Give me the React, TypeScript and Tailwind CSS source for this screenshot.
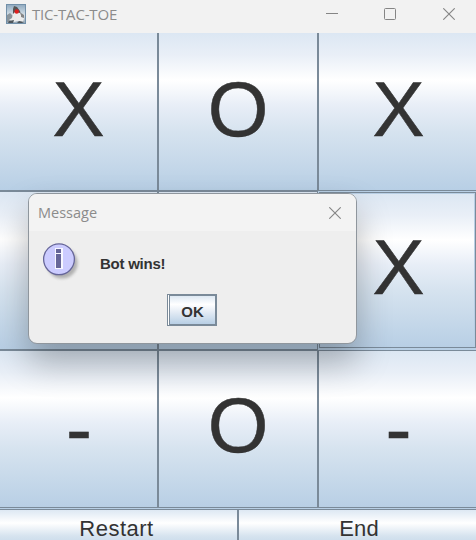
import type { ReactNode } from "react";

const STEEL =
  "bg-[linear-gradient(180deg,#dce7f3_0%,#e9eff7_14%,#ffffff_30%,#e8eef7_46%,#d6e3ef_63%,#b8cfe5_100%)]";

function Mark({ children, className = "" }: { children: ReactNode; className?: string }) {
  return (
    <span className={`block text-[78px] leading-[90px] text-[#333333] [-webkit-text-stroke:0.5px_#333333] ${className}`}>
      {children}
    </span>
  );
}

function Cell({ mark, nudge = "" }: { mark: string; nudge?: string }) {
  return (
    <div className={`flex items-center justify-center ${STEEL}`}>
      {mark && <Mark className={`${mark === "-" ? "" : "pb-1.5"} ${nudge}`}>{mark}</Mark>}
    </div>
  );
}

function CloseIcon() {
  return (
    <svg width="12" height="12" viewBox="0 0 12 12" fill="none" stroke="#858585" strokeWidth="1.1">
      <path d="M0.3 0.3 11.7 11.7M11.7 0.3 0.3 11.7" />
    </svg>
  );
}

function DukeIcon() {
  return (
    <svg width="20" height="20" viewBox="0 0 20 20">
      <defs>
        <linearGradient id="sky" x1="0" y1="0" x2="0" y2="1">
          <stop offset="0" stopColor="#8fa9bf" />
          <stop offset="0.55" stopColor="#d6e1e9" />
          <stop offset="1" stopColor="#91a3b2" />
        </linearGradient>
      </defs>
      <rect x="0.5" y="0.5" width="19" height="19" fill="url(#sky)" stroke="#7290a9" />
      <path d="M1 11 4 9 7 12 5 18H1Z" fill="#8b959c" />
      <path d="M7 5 8 2 11 3 14 7 15 11 12 11 7 10Z" fill="#555555" />
      <path d="M7 10 9 8 14 9 16 13 18 14 17 18 12 17 8 18 3 16 6 14Z" fill="#ececec" />
      <path d="M15 9 18 11 18 14 15 13Z" fill="#858585" />
      <path d="M3 17 8 16 7 19H2ZM13 17 18 18 16 19H11Z" fill="#4f565b" />
      <circle cx="10.7" cy="7.5" r="2.2" fill="#dd2020" />
    </svg>
  );
}

function InfoIcon() {
  return (
    <svg width="38" height="40" viewBox="0 0 38 40">
      <defs>
        <filter id="soft" x="-20%" y="-20%" width="150%" height="150%">
          <feGaussianBlur stdDeviation="1.5" />
        </filter>
      </defs>
      <circle cx="20" cy="21" r="15.5" fill="#888" opacity="0.6" filter="url(#soft)" />
      <circle cx="17" cy="17.3" r="15.4" fill="#ccccff" stroke="#666699" strokeWidth="1.3" />
      <path d="M13 6h8v21h-8z" fill="#f7f7ff" />
      <path d="M14 7h5v4h-5zM14 12h5v14h-5z" fill="#666699" />
    </svg>
  );
}

export default function App() {
  return (
    <div className="relative flex h-[540px] w-[476px] flex-col overflow-hidden bg-[#eeeeee] font-['Liberation_Sans',sans-serif]">
      <header className="flex h-[33px] shrink-0 items-start bg-[#f2f2f2] pl-1.5 text-[#8b8b8b]">
        <div className="pt-1"><DukeIcon /></div>
        <span className="ml-1.5 pt-1 font-['Open_Sans',sans-serif] text-[15px] leading-5 tracking-[-0.18px]">TIC-TAC-TOE</span>
        <div className="ml-auto flex items-center gap-[46px] pr-[21px] pt-2">
          <svg className="-ml-px mr-0.5" width="12" height="12" viewBox="0 0 12 12" stroke="#858585">
            <path d="M0 5.5h12" />
          </svg>
          <svg className="-ml-0.5 mr-px" width="12" height="12" viewBox="0 0 12 12" fill="none" stroke="#858585">
            <rect x="0.5" y="0.5" width="11" height="11" rx="1" />
          </svg>
          <CloseIcon />
        </div>
      </header>

      <main className="grid h-[474px] shrink-0 grid-cols-[157px_158px_157px] grid-rows-[157px_157px_156px] gap-0.5 bg-[#7a8a99]">
        <Cell mark="X" />
        <Cell mark="O" />
        <Cell mark="X" nudge="pl-0.5" />
        <Cell mark="" />
        <Cell mark="" />
        <div className="z-10 -m-0.5 mr-0 flex border border-r-0 border-[#7a8a99] bg-[#b8cfe5] p-px pb-0.5 pr-0">
          <div className="flex flex-1 border border-[#7a8a99]">
            <div className={`flex flex-1 items-center justify-center border-r border-t border-r-[#b8cfe5] border-t-[#b8cfe5] ${STEEL}`}>
              <Mark className="pb-[7px] pl-[3px]">X</Mark>
            </div>
          </div>
        </div>
        <Cell mark="-" nudge="pl-px" />
        <Cell mark="O" nudge="pb-2" />
        <Cell mark="-" nudge="pl-0.5" />
      </main>

      <footer className="flex h-[33px] shrink-0 flex-col border-t border-[#7a8a99] bg-[#b8cfe5] pt-px">
        <div className="grid flex-1 grid-cols-[237px_237px] gap-0.5 border-t border-[#7a8a99] bg-[#7a8a99] text-[22px] leading-[25px] tracking-[0.5px] text-[#333333]">
          <div className="overflow-hidden bg-[linear-gradient(180deg,#dde8f3_0px,#fff_13px,#d6e3ef_26px,#c8daea_34px)] pr-1 pt-[6px] text-center">
            Restart
          </div>
          <div className="overflow-hidden bg-[linear-gradient(180deg,#dde8f3_0px,#fff_13px,#d6e3ef_26px,#c8daea_34px)] pl-[3px] pt-[6px] text-center tracking-[0.2px]">
            End
          </div>
        </div>
      </footer>

      <section
        role="dialog"
        className="absolute left-7 top-[193px] z-20 flex h-[151px] w-[329px] flex-col overflow-hidden rounded-[9px] border border-[#8f969d] bg-[#eeeeee] shadow-[0_18px_34px_rgba(0,0,0,0.28)]"
      >
        <div className="flex h-[37px] shrink-0 items-center justify-between bg-[#f3f3f3] pl-[9px] pr-[15px]">
          <span className="font-['Open_Sans',sans-serif] text-[14.5px] leading-5 text-[#8b8b8b]">Message</span>
          <CloseIcon />
        </div>
        <div className="flex h-[63px] shrink-0 pl-[13px] pt-[11px]">
          <InfoIcon />
          <span className="ml-5 pt-[13px] text-[15px] font-bold leading-[18px] tracking-[-0.25px] text-[#333333]">Bot wins!</span>
        </div>
        <button className="ml-[138px] h-8 w-[50px] shrink-0 border border-[#7a8a99] bg-white pl-px">
          <span className="flex h-full items-center justify-center border border-[#7a8a99] bg-[linear-gradient(180deg,#dde8f3,#fff_30%,#e1eaf4_60%,#b8cfe5)] pt-1 text-[15px] font-bold leading-[18px] text-[#333333]">
            OK
          </span>
        </button>
      </section>
    </div>
  );
}
